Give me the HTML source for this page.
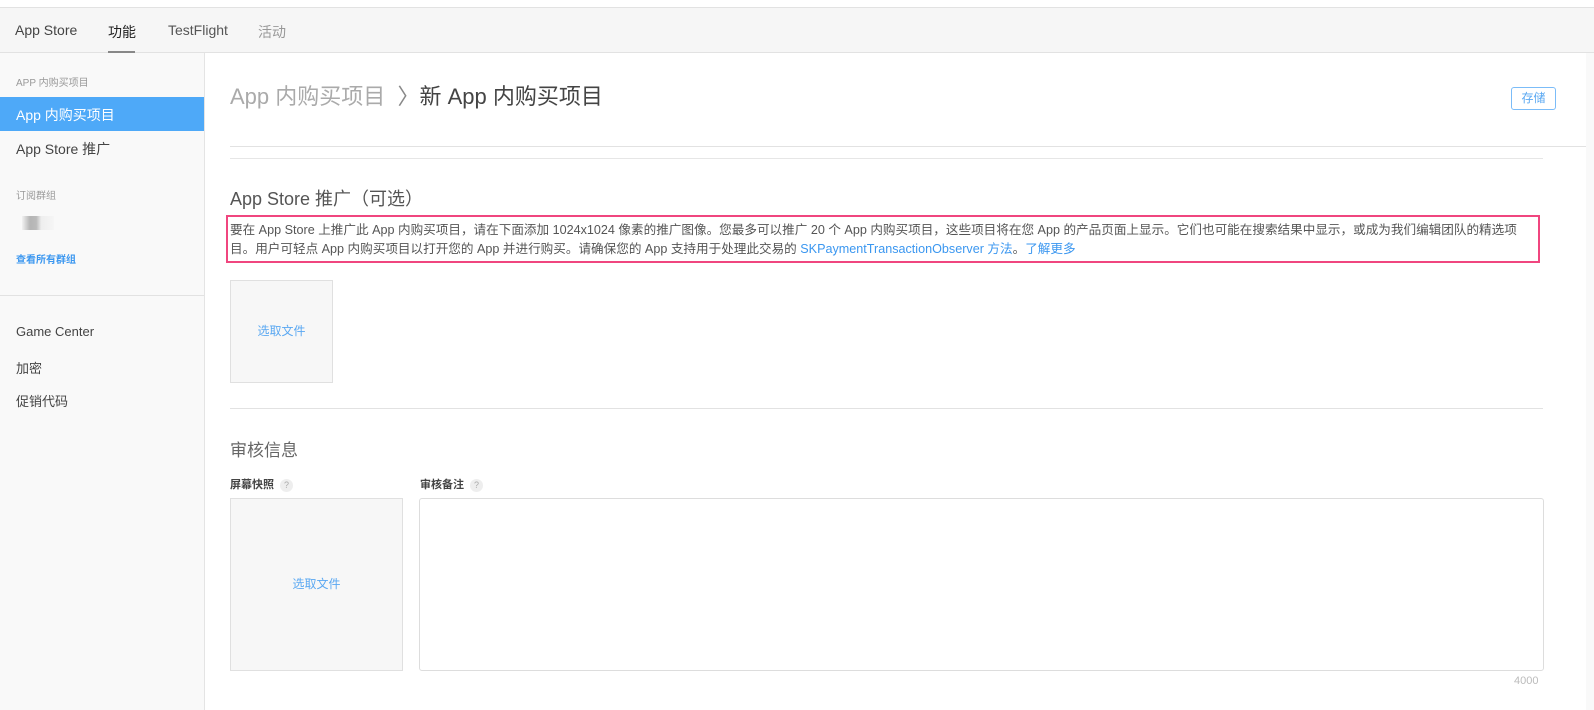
<!DOCTYPE html>
<html><head><meta charset="utf-8"><style>
*{margin:0;padding:0;box-sizing:border-box}
body{width:1594px;height:710px;overflow:hidden;background:#fff;font-family:"Liberation Sans","Noto Sans CJK SC",sans-serif;position:relative;color:#333}
.a{position:absolute;white-space:nowrap}
</style></head><body>
<div class="a" style="left:0;top:7px;width:1594px;height:46px;background:#f6f6f6;border-top:1px solid #e2e2e2;border-bottom:1px solid #e2e2e2"></div>
<div class="a" style="left:15px;top:22px;font-size:14px;color:#444">App Store</div>
<div class="a" style="left:108px;top:22px;font-size:14px;color:#222">功能</div>
<div class="a" style="left:108px;top:51px;width:27px;height:2px;background:#888"></div>
<div class="a" style="left:168px;top:22px;font-size:14px;color:#555">TestFlight</div>
<div class="a" style="left:258px;top:22px;font-size:14px;color:#999">活动</div>

<div class="a" style="left:0;top:53px;width:205px;height:657px;background:#f9f9f9;border-right:1px solid #e4e4e4"></div>
<div class="a" style="left:16px;top:74px;font-size:10px;color:#999">APP 内购买项目</div>
<div class="a" style="left:0;top:97px;width:204px;height:34px;background:#4ea9f8"></div>
<div class="a" style="left:16px;top:105px;font-size:14px;color:#fff">App 内购买项目</div>
<div class="a" style="left:16px;top:139px;font-size:14px;color:#444">App Store 推广</div>
<div class="a" style="left:16px;top:187px;font-size:10px;color:#999">订阅群组</div>
<div class="a" style="left:22px;top:216px;width:32px;height:14px;background:linear-gradient(90deg,#f2f2f2,#b5b5b5 25%,#bbb 45%,#eee 60%,#f6f6f6)"></div>
<div class="a" style="left:16px;top:251px;font-size:10px;color:#3b97f0;font-weight:bold">查看所有群组</div>
<div class="a" style="left:0;top:295px;width:204px;height:1px;background:#e2e2e2"></div>
<div class="a" style="left:16px;top:324px;font-size:13px;color:#444">Game Center</div>
<div class="a" style="left:16px;top:358px;font-size:13px;color:#444">加密</div>
<div class="a" style="left:16px;top:391px;font-size:13px;color:#444">促销代码</div>

<div class="a" style="left:1586px;top:53px;width:8px;height:657px;background:#f9f9f9"></div>
<div class="a" style="left:230px;top:79px;font-size:22px;color:#aaa">App 内购买项目 <span style="color:#888">&nbsp;〉</span><span style="color:#444">新 App 内购买项目</span></div>
<div class="a" style="left:1511px;top:87px;width:45px;height:23px;border:1px solid #7bbcf8;border-radius:3px;font-size:12px;color:#5aa8f2;text-align:center;line-height:21px">存储</div>
<div class="a" style="left:230px;top:146px;width:1356px;height:1px;background:#e2e2e2"></div>
<div class="a" style="left:230px;top:158px;width:1313px;height:1px;background:#e6e6e6"></div>
<div class="a" style="left:230px;top:185px;font-size:18px;color:#555">App Store 推广（可选）</div>
<div class="a" style="left:226px;top:215px;width:1314px;height:48px;border:2px solid #f0467f"></div>
<div class="a" style="left:230px;top:221px;font-size:12.6px;line-height:19px;color:#555;white-space:normal;width:1306px">要在 App Store 上推广此 App 内购买项目，请在下面添加 1024x1024 像素的推广图像。您最多可以推广 20 个 App 内购买项目，这些项目将在您 App 的产品页面上显示。它们也可能在搜索结果中显示，或成为我们编辑团队的精选项目。用户可轻点 App 内购买项目以打开您的 App 并进行购买。请确保您的 App 支持用于处理此交易的 <span style="color:#3b97f0">SKPaymentTransactionObserver 方法</span>。<span style="color:#3b97f0">了解更多</span></div>
<div class="a" style="left:230px;top:280px;width:103px;height:103px;background:#f7f7f7;border:1px solid #e0e0e0;font-size:12px;color:#5aa8f2;text-align:center;line-height:101px">选取文件</div>
<div class="a" style="left:230px;top:408px;width:1313px;height:1px;background:#e2e2e2"></div>
<div class="a" style="left:230px;top:436px;font-size:17px;color:#666">审核信息</div>
<div class="a" style="left:230px;top:476px;font-size:11px;color:#444;font-weight:bold">屏幕快照 <span style="display:inline-block;width:13px;height:13px;border-radius:50%;background:#eee;color:#aaa;font-weight:normal;font-size:9px;text-align:center;line-height:13px;margin-left:3px">?</span></div>
<div class="a" style="left:420px;top:476px;font-size:11px;color:#444;font-weight:bold">审核备注 <span style="display:inline-block;width:13px;height:13px;border-radius:50%;background:#eee;color:#aaa;font-weight:normal;font-size:9px;text-align:center;line-height:13px;margin-left:3px">?</span></div>
<div class="a" style="left:230px;top:498px;width:173px;height:173px;background:#f7f7f7;border:1px solid #e0e0e0;font-size:12px;color:#5aa8f2;text-align:center;line-height:171px">选取文件</div>
<div class="a" style="left:419px;top:498px;width:1125px;height:173px;border:1px solid #ddd;border-radius:3px"></div>
<div class="a" style="left:1514px;top:675px;font-size:11px;color:#bbb">4000</div>
</body></html>
